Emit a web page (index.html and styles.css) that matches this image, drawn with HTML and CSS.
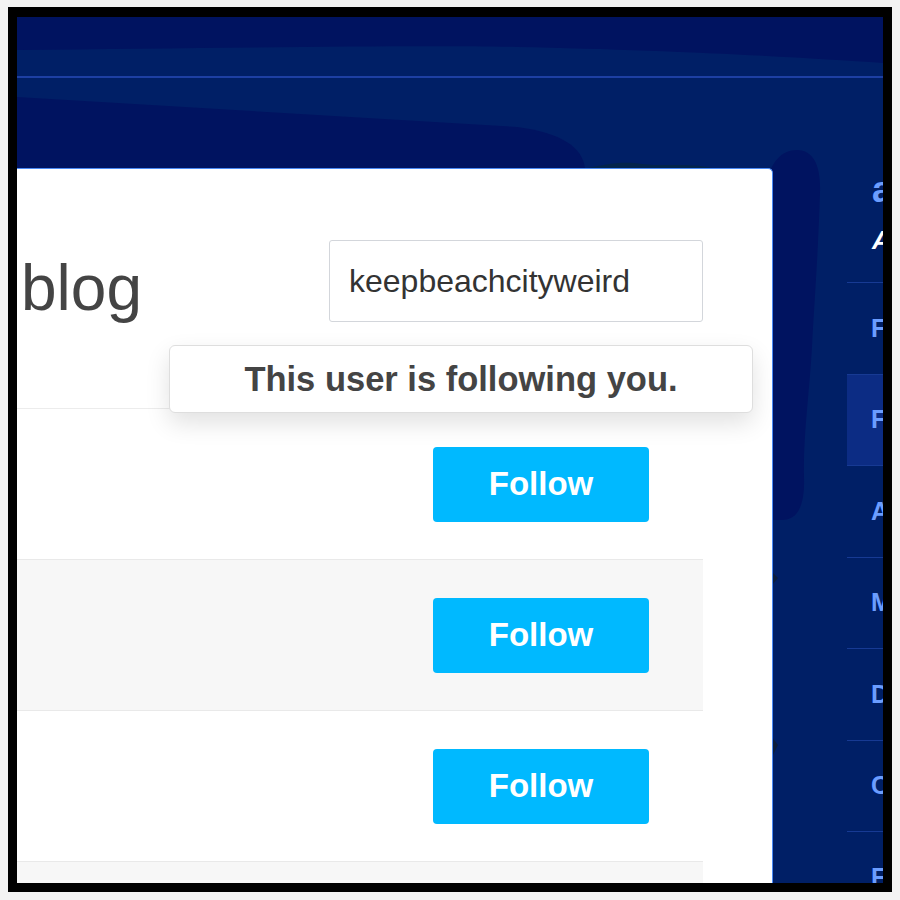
FILE: index.html
```html
<!DOCTYPE html>
<html lang="en">
<head>
  <meta charset="UTF-8">
  <meta name="viewport" content="width=device-width, initial-scale=1.0">
  <title>Followers</title>
  <link rel="stylesheet" href="styles.css">
</head>
<body>
  <div class="frame">
    <div class="screen">
      <!-- background waves behind the dashboard -->
      <svg class="backdrop" viewBox="0 0 866 866" preserveAspectRatio="none" aria-hidden="true">
        <rect width="866" height="866" fill="#001360"/>
        <path d="M0,33 C200,31 400,28 500,30 C650,33 780,40 866,46 L866,866 L0,866 Z" fill="#001f66"/>
        <path d="M0,80 L500,110 C545,116 565,130 568,151 L568,866 L0,866 Z" fill="#001360"/>
        <rect y="59" width="866" height="2" fill="#1d3fa3"/>
        <path d="M566,152 C590,147 605,144 625,147 C650,150 675,145 700,152 Z" fill="#03244c"/>
        <path d="M750,503 L750,170 C752,145 765,133 780,133 C797,133 804,150 803,175 C801,240 797,290 795,330 C792,380 786,420 787,460 C788,490 780,503 765,503 Z" fill="#001360"/>
        <path d="M755,555 L761,561 L755,568 Z" fill="#0b1d3c"/>
        <path d="M755,720 L761,728 L755,740 Z" fill="#0b1d3c"/>
      </svg>

      <main class="card">
        <header class="card-head">
          <h1 class="title">blog</h1>
          <div class="search">
            <input class="search-input" type="text" value="keepbeachcityweird">
            <div class="tip">This user is following you.</div>
          </div>
        </header>

        <ul class="user-list">
          <li class="user-row"><button class="follow-btn">Follow</button></li>
          <li class="user-row"><button class="follow-btn">Follow</button></li>
          <li class="user-row"><button class="follow-btn">Follow</button></li>
          <li class="user-row"></li>
        </ul>
      </main>

      <nav class="sidebar">
        <div class="profile">
          <div class="blog-name">aquamarine</div>
          <div class="blog-title">A gem blog</div>
        </div>
        <a class="nav-item" href="#">Following</a>
        <a class="nav-item active" href="#">Followers</a>
        <a class="nav-item" href="#">Activity</a>
        <a class="nav-item" href="#">Messages</a>
        <a class="nav-item" href="#">Drafts</a>
        <a class="nav-item" href="#">Customize</a>
        <a class="nav-item" href="#">Featured</a>
      </nav>
    </div>
  </div>
</body>
</html>
```

FILE: styles.css
```css
* {
  margin: 0;
  padding: 0;
  box-sizing: border-box;
}

body {
  background: #f3f3f3;
  font-family: 'Liberation Sans', Arial, sans-serif;
}

.frame {
  margin: 7px 0 0 8px;
  width: 884px;
  height: 885px;
  border-style: solid;
  border-color: #000;
  border-width: 10px 9px 9px 9px;
  overflow: hidden;
}

.screen {
  position: relative;
  height: 100%;
  display: grid;
  grid-template-columns: 756px 1fr;
  grid-template-rows: 1fr;
  column-gap: 74px;
  background: #001360;
}

.backdrop {
  position: absolute;
  top: 0;
  left: 0;
  width: 100%;
  height: 100%;
}

/* main white card */
.card {
  position: relative;
  margin-top: 151px;
  background: #fff;
  border-top: 1px solid #4a8af5;
  border-right: 1px solid #4a8af5;
  border-top-right-radius: 5px;
}

.card-head {
  width: 686px;
  height: 240px;
  padding-top: 71px;
  display: flex;
  justify-content: space-between;
  align-items: flex-start;
  border-bottom: 1px solid #ececec;
}

.title {
  margin-top: 12px;
  padding-left: 4px;
  font-size: 64px;
  line-height: 72px;
  font-weight: normal;
  color: #444;
}

.search {
  position: relative;
  width: 374px;
}

.search-input {
  width: 100%;
  height: 82px;
  padding: 0 19px;
  border: 1px solid #d3d6db;
  border-radius: 3px;
  font-family: 'Liberation Sans', Arial, sans-serif;
  font-size: 32px;
  color: #333;
  outline: none;
}

.tip {
  position: absolute;
  left: -160px;
  top: 105px;
  width: 584px;
  height: 68px;
  display: flex;
  align-items: center;
  justify-content: center;
  background: #fff;
  border: 1px solid #dedede;
  border-radius: 6px;
  box-shadow: 0 10px 24px rgba(0, 0, 0, 0.12);
  font-size: 34.5px;
  font-weight: bold;
  color: #444;
  z-index: 2;
}

.user-list {
  list-style: none;
  width: 686px;
}

.user-row {
  height: 151px;
  padding-right: 54px;
  display: flex;
  justify-content: flex-end;
  align-items: center;
  border-bottom: 1px solid #e9e9e9;
}

.user-row:nth-child(even) {
  background: #f7f7f7;
}

.follow-btn {
  width: 216px;
  height: 75px;
  background: #00b9ff;
  color: #fff;
  border: none;
  border-radius: 4px;
  font-family: 'Liberation Sans', Arial, sans-serif;
  font-size: 33px;
  font-weight: bold;
  cursor: pointer;
}

/* right-hand blog menu */
.sidebar {
  position: relative;
  width: 260px;
  padding-top: 153px;
}

.profile {
  height: 112px;
  padding-left: 25px;
}

.blog-name {
  font-size: 36px;
  line-height: 40px;
  font-weight: bold;
  color: #6b9dff;
}

.blog-title {
  margin-top: 10px;
  font-size: 26px;
  line-height: 40px;
  font-style: italic;
  font-weight: bold;
  color: #fff;
}

.nav-item {
  height: 91.5px;
  padding-left: 24px;
  display: flex;
  align-items: center;
  border-top: 1px solid #173a93;
  font-size: 25px;
  font-weight: bold;
  color: #6b9dff;
  text-decoration: none;
}

.nav-item.active {
  background: #0c2c84;
}
```
